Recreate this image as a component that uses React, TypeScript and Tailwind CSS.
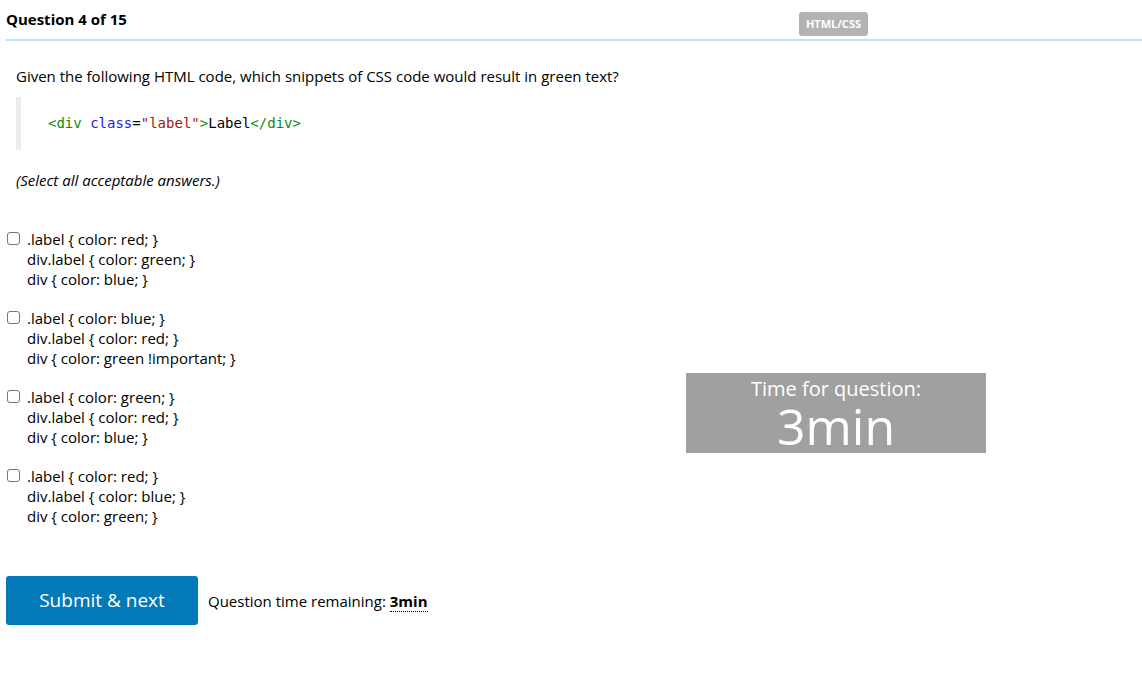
import React from 'react';

const options = [
  ['.label { color: red; }', 'div.label { color: green; }', 'div { color: blue; }'],
  ['.label { color: blue; }', 'div.label { color: red; }', 'div { color: green !important; }'],
  ['.label { color: green; }', 'div.label { color: red; }', 'div { color: blue; }'],
  ['.label { color: red; }', 'div.label { color: blue; }', 'div { color: green; }'],
];

export default function App() {
  return (
    <div className="min-h-screen w-full bg-white font-['Open_Sans',sans-serif] text-black">
      {/* header */}
      <div className="ml-[6px] flex h-[41px] items-start border-b-2 border-[#b8e4fb]">
        <h1 className="mt-[8px] flex-1 text-[15px] font-bold leading-[22px]">Question 4 of 15</h1>
        <span className="mt-[12px] mr-[274px] rounded-[3px] bg-[#b3b3b3] px-[7px] py-[4px] text-[11px] font-bold leading-[16px] text-white">
          HTML/CSS
        </span>
      </div>

      <div className="pl-[16px]">
        <p className="mt-[24px] text-[15px] leading-[22px]">
          Given the following HTML code, which snippets of CSS code would result in green text?
        </p>

        <div className="mt-[10px] flex h-[53px] items-center whitespace-pre border-l-[5px] border-[#ececec] pl-[27px] font-['DejaVu_Sans_Mono',monospace] text-[14px]">
          <span className="text-[#118811]">{'<div '}</span>
          <span className="text-[#1c1cf0]">class</span>
          <span className="text-black">=</span>
          <span className="text-[#a31515]">"label"</span>
          <span className="text-[#118811]">&gt;</span>
          <span className="text-black">Label</span>
          <span className="text-[#118811]">&lt;/div&gt;</span>
        </div>

        <p className="mt-[19px] text-[15px] italic leading-[22px]">(Select all acceptable answers.)</p>
      </div>

      <div className="mt-[38px] flex">
        <div className="flex flex-1 flex-col gap-[19px] pl-[7px]">
          {options.map((lines, i) => (
            <label key={i} className="flex items-start gap-[7px]">
              <input
                type="checkbox"
                className="mt-[3px] h-[13px] w-[13px] appearance-none rounded-[3px] border border-[#767676] bg-white"
              />
              <span className="flex flex-col text-[15px] leading-[20px]">
                {lines.map((l, j) => (
                  <span key={j}>{l}</span>
                ))}
              </span>
            </label>
          ))}
        </div>
        <div className="mt-[144px] mr-[156px] flex h-[80px] w-[300px] flex-col items-center bg-[#a0a0a0] text-white">
          <span className="mt-[4px] text-[20px] leading-[24px]">Time for question:</span>
          <span className="mt-[2px] text-[50px] leading-[46px]">3min</span>
        </div>
      </div>

      <div className="mt-[50px] ml-[6px] flex items-center gap-[10px]">
        <button className="h-[49px] w-[192px] rounded-[3px] bg-[#0479b8] text-[19px] text-white">
          Submit &amp; next
        </button>
        <span className="mt-[2px] text-[15px]">
          Question time remaining:{' '}
          <b className="border-b border-dotted border-black">3min</b>
        </span>
      </div>
    </div>
  );
}
